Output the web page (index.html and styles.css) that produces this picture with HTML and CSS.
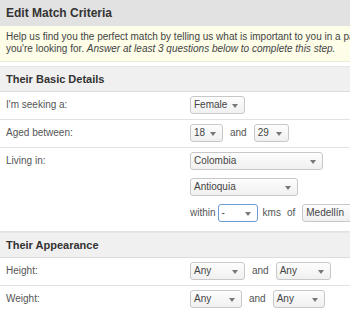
FILE: index.html
```html
<!DOCTYPE html>
<html lang="en">
<head>
    <meta charset="UTF-8">
    <title>Edit Match Criteria</title>
    <link rel="stylesheet" href="styles.css">
</head>
<body>
    <div class="page">
        <h1 class="title">Edit Match Criteria</h1>

        <div class="notice">
            Help us find you the perfect match by telling us what is important to you in a partner and what
            you're looking for. <em>Answer at least 3 questions below to complete this step.</em>
        </div>

        <!-- Basic details -->
        <h2 class="section">Their Basic Details</h2>
        <div class="row">
            <div class="label">I'm seeking a:</div>
            <div class="field">
                <span class="select w-gender">Female<i class="arrow"></i></span>
            </div>
        </div>
        <div class="row">
            <div class="label">Aged between:</div>
            <div class="field">
                <span class="select w-age">18<i class="arrow"></i></span>
                <span class="word">and</span>
                <span class="select w-age2">29<i class="arrow"></i></span>
            </div>
        </div>
        <div class="row">
            <div class="label">Living in:</div>
            <div class="field stack">
                <div><span class="select w-country">Colombia<i class="arrow"></i></span></div>
                <div><span class="select w-region">Antioquia<i class="arrow"></i></span></div>
                <div class="line">
                    <span class="word">within</span>
                    <span class="select w-dist focus">-<i class="arrow"></i></span>
                    <span class="word kms">kms</span>
                    <span class="word of">of</span>
                    <span class="select w-city">Medellín<i class="arrow"></i></span>
                </div>
            </div>
        </div>

        <!-- Appearance -->
        <h2 class="section">Their Appearance</h2>
        <div class="row">
            <div class="label">Height:</div>
            <div class="field">
                <span class="select w-any">Any<i class="arrow"></i></span>
                <span class="word">and</span>
                <span class="select w-any">Any<i class="arrow"></i></span>
            </div>
        </div>
        <div class="row">
            <div class="label">Weight:</div>
            <div class="field">
                <span class="select w-any2">Any<i class="arrow"></i></span>
                <span class="word">and</span>
                <span class="select w-any2">Any<i class="arrow"></i></span>
            </div>
        </div>
    </div>
</body>
</html>
```

FILE: styles.css
```css
body {
    margin: 0;
    font-family: "Liberation Sans", Arial, sans-serif;
    font-size: 10px;
    color: #444;
    background-color: #fff;
    overflow: hidden;
}
.page {
    width: 440px;
}
.title {
    margin: 0;
    padding: 0 6px;
    height: 26px;
    line-height: 26px;
    font-size: 12px;
    font-weight: bold;
    color: #333;
    background-color: #e2e2e2;
}
.notice {
    margin-bottom: 4px;
    padding: 5px 6px 6px;
    line-height: 12px;
    color: #444;
    background-color: #fdfde8;
    border-bottom: 1px solid #eeeed8;
}
.notice em {
    font-style: italic;
}
.section {
    margin: 0;
    padding: 0 6px;
    height: 24px;
    line-height: 24px;
    font-size: 11px;
    font-weight: bold;
    color: #333;
    background-color: #f0f0f0;
    border-top: 1px solid #e6e6e6;
    border-bottom: 1px solid #dcdcdc;
}
.row {
    display: flex;
    padding: 4px 0 5px;
    border-bottom: 1px solid #e2e2e2;
}
.label {
    width: 184px;
    padding-left: 6px;
    line-height: 18px;
    color: #555;
}
.field {
    display: flex;
    align-items: center;
    gap: 7px;
}
.field.stack {
    flex-direction: column;
    align-items: flex-start;
    gap: 8px;
    padding-bottom: 4px;
}
.line {
    display: flex;
    align-items: center;
    gap: 2px;
}
.word {
    color: #555;
    line-height: 18px;
}
.kms {
    margin-left: 3px;
}
.of {
    margin: 0 5px 0 4px;
}
.select {
    position: relative;
    display: inline-block;
    box-sizing: border-box;
    height: 18px;
    line-height: 16px;
    padding-left: 3px;
    border: 1px solid #c8c8c8;
    border-radius: 3px;
    background: linear-gradient(#fdfdfd, #f0f0f0);
    color: #444;
}
.select.focus {
    border-color: #6d9ad4;
    background: #fff;
}
.arrow {
    position: absolute;
    right: 6px;
    top: 7px;
    width: 0;
    height: 0;
    border-left: 3px solid transparent;
    border-right: 3px solid transparent;
    border-top: 4px solid #777;
}
.w-gender { width: 55px; }
.w-age { width: 33px; }
.w-age2 { width: 35px; }
.w-country { width: 133px; }
.w-region { width: 108px; }
.w-dist { width: 40px; }
.w-city { width: 70px; }
.w-any { width: 55px; }
.w-any2 { width: 52px; }
```
